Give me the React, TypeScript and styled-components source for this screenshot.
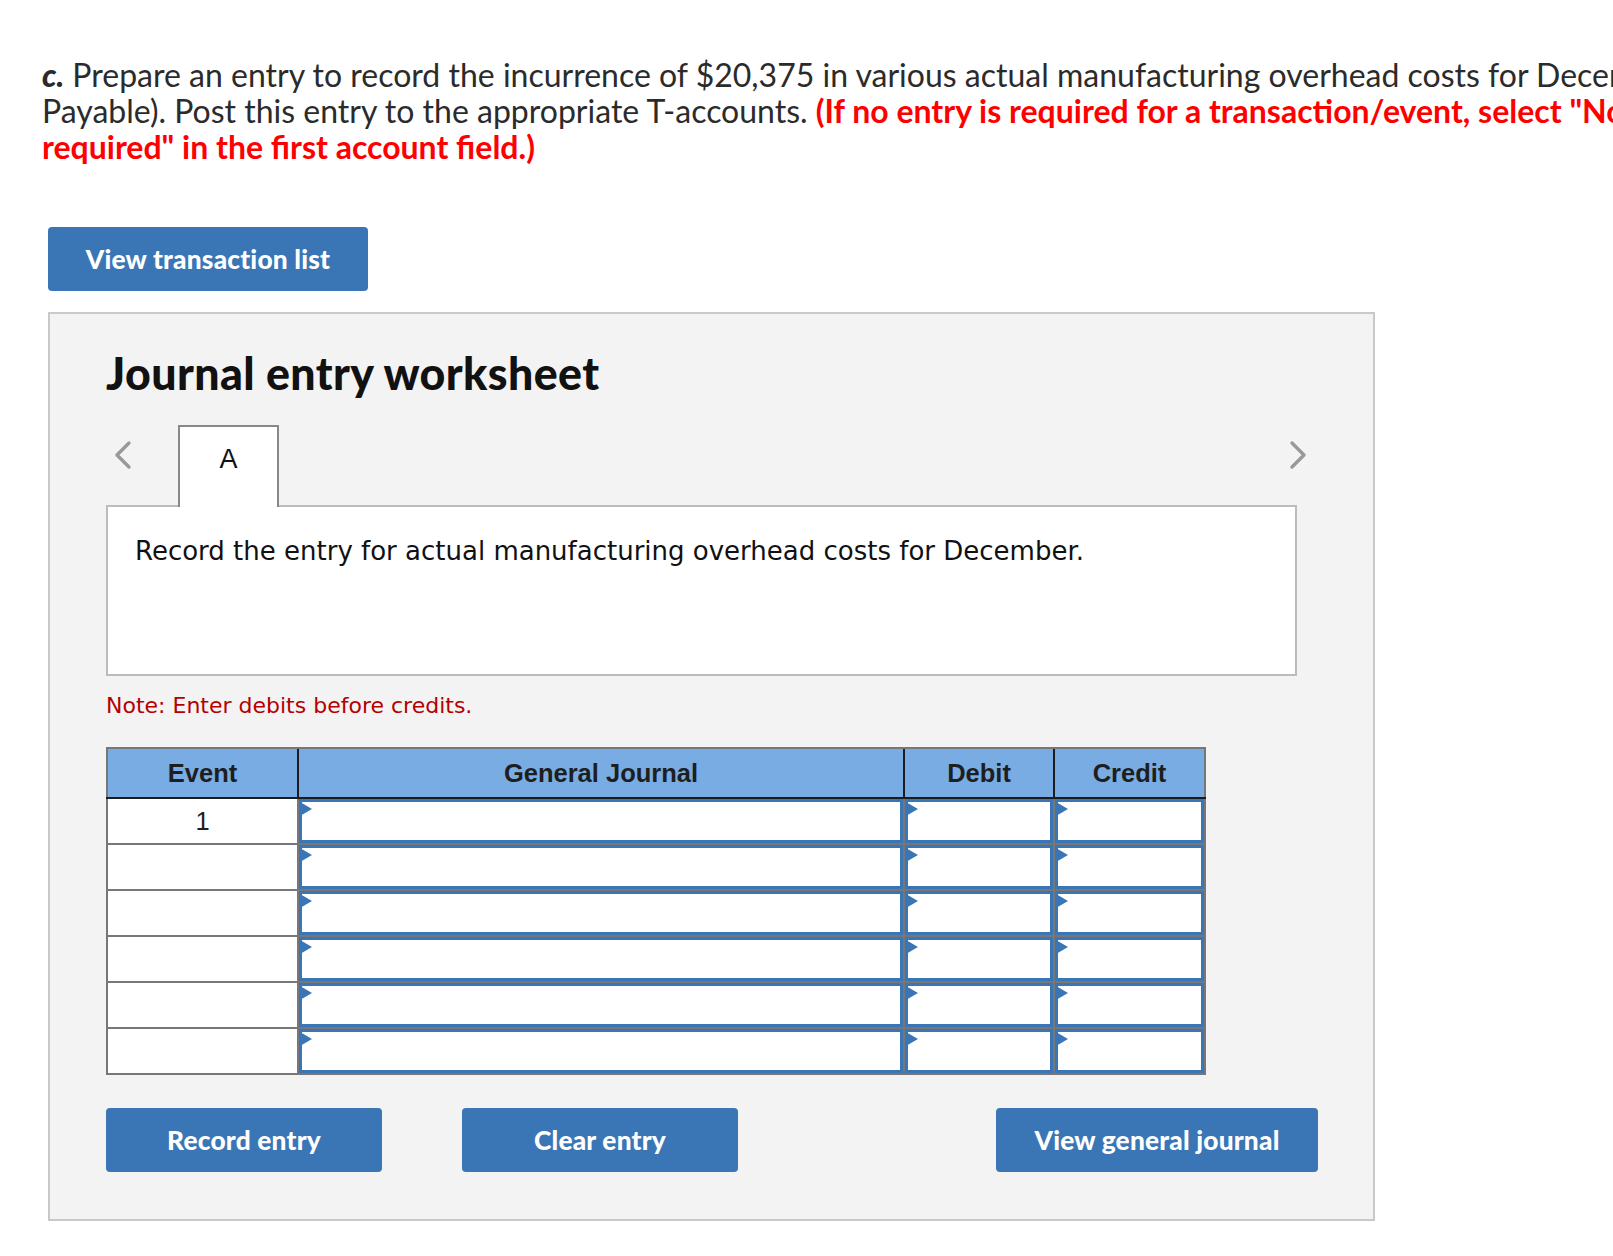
import React from "react";
import styled, { createGlobalStyle } from "styled-components";

const GlobalStyle = createGlobalStyle`
  html, body {
    margin: 0;
    padding: 0;
    background: #ffffff;
    overflow-x: hidden;
  }
  body {
    font-family: "Lato", "Open Sans", sans-serif;
    color: #2b2b2b;
  }
`;

const Page = styled.div`
  padding: 57px 0 40px 0;
  width: 1613px;
  overflow: hidden;
`;

const Question = styled.p`
  margin: 0 0 0 42px;
  font-family: "Lato", sans-serif;
  font-size: 32px;
  line-height: 36px;
  white-space: nowrap;
  color: #2b2b2b;
  b {
    font-style: italic;
    font-weight: 900;
  }
`;

const Warning = styled.span`
  color: #ff0000;
  font-weight: 700;
`;

const BlueButton = styled.button<{ $w: number }>`
  width: ${(p) => p.$w}px;
  height: 64px;
  border: none;
  border-radius: 4px;
  background: #3a76b6;
  color: #ffffff;
  font-family: "Lato", sans-serif;
  font-weight: 900;
  font-size: 26.3px;
  letter-spacing: 0.2px;
  cursor: pointer;
  padding: 0;
`;

const TopButtonRow = styled.div`
  margin: 62px 0 0 48px;
`;

const Panel = styled.section`
  margin: 21px 0 0 48px;
  width: 1267px;
  background: #f3f3f3;
  border: 2px solid #c9c9c9;
  padding: 34px 0 47px 56px;
  box-sizing: content-box;
`;

const Title = styled.h2`
  margin: 0;
  font-family: "Lato", sans-serif;
  font-weight: 900;
  font-size: 44.7px;
  line-height: 50px;
  letter-spacing: 0.4px;
  color: #111111;
`;

const TabRow = styled.div`
  margin: 27px 0 0 7px;
  width: 1195px;
  display: flex;
  align-items: flex-start;
  position: relative;
  z-index: 1;
`;

const Chevron = styled.svg`
  width: 19px;
  height: 30px;
  margin-top: 15px;
  flex: none;
`;

const Tab = styled.div`
  margin-left: 46px;
  width: 101px;
  height: 82px;
  background: #ffffff;
  border: 2px solid #888888;
  border-bottom: none;
  display: flex;
  justify-content: center;
  padding-top: 17px;
  box-sizing: border-box;
  font-family: "Liberation Sans", Arial, sans-serif;
  font-size: 27px;
  line-height: 30px;
  color: #111111;
`;

const Spacer = styled.div`
  flex: 1;
`;

const Prompt = styled.div`
  margin-top: -2px;
  width: 1191px;
  height: 171px;
  background: #ffffff;
  border: 2px solid #bcbcbc;
  padding: 28px 0 0 27px;
  box-sizing: border-box;
  font-family: "DejaVu Sans", Verdana, sans-serif;
  font-size: 26px;
  line-height: 32px;
  color: #111111;
`;

const Note = styled.div`
  margin-top: 16px;
  font-family: "DejaVu Sans", Verdana, sans-serif;
  font-size: 22px;
  line-height: 28px;
  color: #b40000;
`;

const Journal = styled.table`
  margin-top: 27px;
  border-collapse: collapse;
  width: 1090px;
  table-layout: fixed;
  border: 2px solid #777777;
`;

const HeadCell = styled.th<{ $w: number }>`
  width: ${(p) => p.$w}px;
  height: 48px;
  padding: 0;
  background: #78ace2;
  border-left: 2px solid #1c1c1c;
  border-bottom: 2px solid #1c1c1c;
  border-top: 2px solid #777777;
  font-family: "Liberation Sans", Arial, sans-serif;
  font-weight: 700;
  font-size: 25.5px;
  color: #1e1e1e;
  text-align: center;
  &:first-child {
    border-left: 2px solid #777777;
  }
`;

const EventCell = styled.td`
  height: 44px;
  padding: 0;
  background: #ffffff;
  border: 2px solid #777777;
  font-family: "Liberation Sans", Arial, sans-serif;
  font-size: 25.5px;
  color: #1e1e1e;
  text-align: center;
  vertical-align: middle;
`;

const EntryCell = styled.td`
  height: 44px;
  padding: 0;
  background: #ffffff;
  border: 2px solid #777777;
  vertical-align: top;
`;

const EntryBox = styled.div`
  position: relative;
  height: 44px;
  box-sizing: border-box;
  border: 3px solid #3a76b6;
  background: #ffffff;
  &::before {
    content: "";
    position: absolute;
    left: -2px;
    top: 0px;
    border-top: 7.5px solid transparent;
    border-bottom: 7.5px solid transparent;
    border-left: 12px solid #3a76b6;
  }
`;

const ActionRow = styled.div`
  margin-top: 33px;
  width: 1212px;
  display: flex;
  gap: 80px;
  & > :last-child {
    margin-left: auto;
  }
`;

const ChevronIcon = ({ dir }: { dir: "left" | "right" }) => (
  <Chevron viewBox="0 0 19 30" aria-hidden>
    <path
      d={dir === "left" ? "M16 3 L4 15 L16 27" : "M3 3 L15 15 L3 27"}
      fill="none"
      stroke="#999999"
      strokeWidth="3.4"
      strokeLinecap="round"
      strokeLinejoin="round"
    />
  </Chevron>
);

const rows = [1, 2, 3, 4, 5, 6];

const App = () => {
  return (
    <Page>
      <GlobalStyle />
      <Question>
        <b>c.</b> Prepare an entry to record the incurrence of $20,375 in various actual manufacturing overhead costs for December (credit Accounts
        <br />
        Payable). Post this entry to the appropriate T-accounts.{" "}
        <Warning>(If no entry is required for a transaction/event, select "No journal entry</Warning>
        <br />
        <Warning>required" in the first account field.)</Warning>
      </Question>

      <TopButtonRow>
        <BlueButton $w={320}>View transaction list</BlueButton>
      </TopButtonRow>

      <Panel>
        <Title>Journal entry worksheet</Title>

        <TabRow>
          <ChevronIcon dir="left" />
          <Tab>A</Tab>
          <Spacer />
          <ChevronIcon dir="right" />
        </TabRow>

        <Prompt>Record the entry for actual manufacturing overhead costs for December.</Prompt>

        <Note>Note: Enter debits before credits.</Note>

        <Journal>
          <thead>
            <tr>
              <HeadCell $w={189}>Event</HeadCell>
              <HeadCell $w={604}>General Journal</HeadCell>
              <HeadCell $w={148}>Debit</HeadCell>
              <HeadCell $w={149}>Credit</HeadCell>
            </tr>
          </thead>
          <tbody>
            {rows.map((r) => (
              <tr key={r}>
                <EventCell>{r === 1 ? "1" : ""}</EventCell>
                <EntryCell>
                  <EntryBox />
                </EntryCell>
                <EntryCell>
                  <EntryBox />
                </EntryCell>
                <EntryCell>
                  <EntryBox />
                </EntryCell>
              </tr>
            ))}
          </tbody>
        </Journal>

        <ActionRow>
          <BlueButton $w={276}>Record entry</BlueButton>
          <BlueButton $w={276}>Clear entry</BlueButton>
          <BlueButton $w={322}>View general journal</BlueButton>
        </ActionRow>
      </Panel>
    </Page>
  );
};

export default App;
